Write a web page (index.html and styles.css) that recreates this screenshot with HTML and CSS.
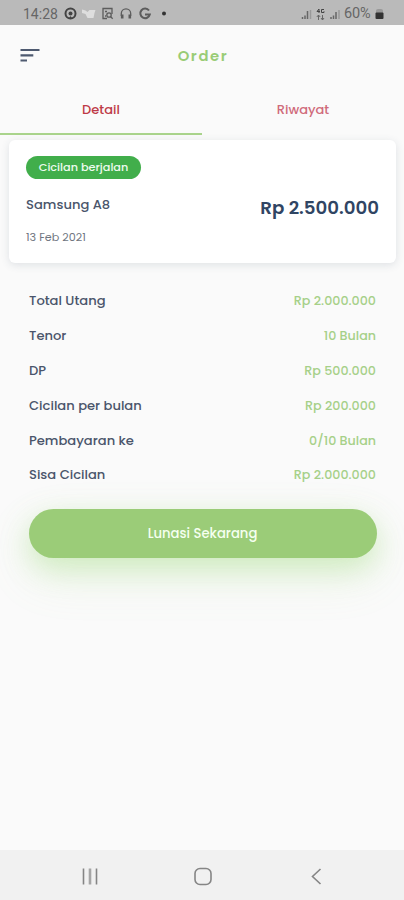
FILE: index.html
```html
<!DOCTYPE html>
<html lang="id">
<head>
<meta charset="utf-8">
<meta name="viewport" content="width=device-width, initial-scale=1">
<title>Order</title>
<link rel="stylesheet" href="styles.css">
</head>
<body>
<div class="screen">
  <div class="status">
    <span class="clock">14:28</span>
    <svg class="status-left" width="104" height="16" viewBox="0 0 104 16" fill="none" stroke="#5c5c5c" stroke-width="1.3">
      <circle cx="7.500" cy="7.500" r="5" stroke="#444" stroke-width="2"/><circle cx="7.500" cy="7.500" r="2" fill="#444" stroke="none"/><path d="M5.500 13l2-3 2 3z" fill="#444" stroke="none"/>
      <path d="M19 3.500l3.500 1 2 1.500 2-2h6l-1 3-1 5h-6l-2-4-3.500-1z" fill="#dedede" stroke="none"/>
      <path d="M44 12.500h-4V2.500h9V8"/><path d="M42 5.500h2M42 10h1"/><circle cx="46" cy="9" r="2.200"/><path d="M47.500 10.500l2.200 2.200"/>
      <path d="M58.300 10V7.500a4.700 4.700 0 0 1 9.400 0V10"/><path d="M59.200 8.500v4M66.800 8.500v4" stroke-width="2.600"/>
      <path d="M86 4.500a4.800 4.800 0 1 0 .8 4H82" stroke-width="2"/>
      <circle cx="101" cy="7.500" r="2" fill="#333" stroke="none"/>
    </svg>
    <svg class="status-right" width="42" height="16" viewBox="0 0 42 16" fill="none" stroke="#666" stroke-width="1.500">
      <path d="M1.500 13v-2M4 13V9.500M6.500 13V5"/><path d="M9.500 13V4" stroke="#999"/>
      <path d="M18 3l-2 2.500h3M18 3v4M23 3.500h-2.500v3h2.500V5.300" stroke="#444" stroke-width="1"/><path d="M17.500 9v5M15.800 11l1.700-2 1.700 2M21.500 14V9M20 12l1.500 2 1.500-2" stroke="#666" stroke-width="1"/>
      <path d="M30 13v-2M32.500 13V9.500M35 13V6"/><path d="M38 13V4" stroke="#999"/>
    </svg>
    <span class="percent">60%</span>
    <svg class="battery" width="9" height="12" viewBox="0 0 9 12"><path d="M1 5V2.500Q1 1 3 1h3q2 0 2 1.500V5z" fill="#999"/><rect x=".5" y="4.500" width="8" height="6.500" rx="1" fill="#333"/></svg>
  </div>
  <header class="header">
    <svg class="menu" width="20" height="15" viewBox="0 0 20 15" stroke="#4e5a70" stroke-width="2.200"><path d="M.5 2h19M.5 7.300h12.800M.5 12.500h6.500"/></svg>
    <h1 class="title">Order</h1>
  </header>
  <nav class="tabs">
    <span class="tab tab-active">Detail</span>
    <span class="tab">Riwayat</span>
  </nav>
  <section class="card">
    <span class="badge">Cicilan berjalan</span>
    <div class="product"><span class="name">Samsung A8</span><span class="price">Rp 2.500.000</span></div>
    <span class="date">13 Feb 2021</span>
  </section>
  <dl class="details">
    <div class="row"><dt>Total Utang</dt><dd>Rp 2.000.000</dd></div>
    <div class="row"><dt>Tenor</dt><dd>10 Bulan</dd></div>
    <div class="row"><dt>DP</dt><dd>Rp 500.000</dd></div>
    <div class="row"><dt>Cicilan per bulan</dt><dd>Rp 200.000</dd></div>
    <div class="row"><dt>Pembayaran ke</dt><dd>0/10 Bulan</dd></div>
    <div class="row"><dt>Sisa Cicilan</dt><dd>Rp 2.000.000</dd></div>
  </dl>
  <button class="pay">Lunasi Sekarang</button>
  <footer class="navbar">
    <svg width="404" height="50" viewBox="0 0 404 50" fill="none" stroke="#858585" stroke-width="1.600"><path d="M83.500 18.500v16M96.500 18.500v16"/><path d="M90 18.500v16" stroke="#a5a5a5" stroke-width="2.600"/><rect x="195" y="18.500" width="16" height="16" rx="5"/><path d="M320.500 19l-8 7.500 8 7.500"/></svg>
  </footer>
</div>
</body>
</html>
```
FILE: styles.css
```css
* { box-sizing: border-box; }
body { margin: 0; background: #fafafa; }
.screen {
  width: 404px; height: 900px; display: flex; flex-direction: column; overflow: hidden;
  font-family: Poppins, Inter, "Open Sans", sans-serif;
  font-size: 13.1px; color: #4a556b;
}
.status { height: 25px; background: #bababa; display: flex; align-items: center; padding: 2px 20px 0 23px; color: #666; font-family: Roboto, sans-serif; flex: none; }
.clock { font-size: 14px; width: 40px; }
.status-right { margin-left: auto; margin-right: 1px; }
.percent { font-size: 14.5px; letter-spacing: -.1px; width: 30px; }
.battery { margin-left: 1px; }
.header { height: 61px; display: grid; grid-template-columns: 1fr auto 1fr; align-items: center; padding: 0 20px; flex: none; }
.title { margin: 0 -2px 0 0; font-size: 14.8px; font-weight: 600; letter-spacing: 1.6px; color: #99cc76; }
.tabs { height: 49px; display: grid; grid-template-columns: 1fr 1fr; flex: none; }
.tab { display: flex; align-items: center; justify-content: center; font-weight: 500; color: #d06b7b; border-bottom: 2px solid transparent; font-size: 13px; }
.tab-active { color: #be3a47; border-color: #aad48c; }
.card { height: 123px; margin: 5px 8px 0 9px; background: #fff; border-radius: 6px; box-shadow: 0 2px 9px rgba(60, 80, 100, .14); padding: 16px 17px; flex: none; display: flex; flex-direction: column; align-items: flex-start; }
.badge { height: 23px; width: 115px; border-radius: 12px; background: #41ae4b; color: #eefbef; font-size: 11.25px; font-weight: 500; display: flex; align-items: center; justify-content: center; flex: none; }
.product { display: flex; width: 100%; justify-content: space-between; height: 37px; margin-top: 12px; align-items: flex-start; font-weight: 500; }
.name { font-size: 13.1px; line-height: 27px; }
.price { font-size: 18.2px; font-weight: 600; color: #304563; line-height: 34px; }
.date { font-size: 11.2px; line-height: 18px; color: #707681; }
.details { margin: 21px 28px 0 29px; flex: none; }
.row { height: 34.8px; display: flex; justify-content: space-between; align-items: center; font-weight: 500; }
.row dd { margin: 0; font-size: 12.7px; color: #a6d088; }
.pay { height: 49px; flex: none; margin: 16.2px 27px 0 29px; padding: 1px 1px 0 0; border: 0; border-radius: 25px; background: #9bcc78; box-shadow: 0 10px 28px rgba(155, 218, 120, .38), 0 18px 48px rgba(155, 218, 120, .16); color: #f5fff0; font: inherit; font-size: 13.2px; font-weight: 500; }
.navbar { height: 50px; margin-top: auto; background: #f1f1f1; flex: none; }
.navbar svg { display: block; }
```
